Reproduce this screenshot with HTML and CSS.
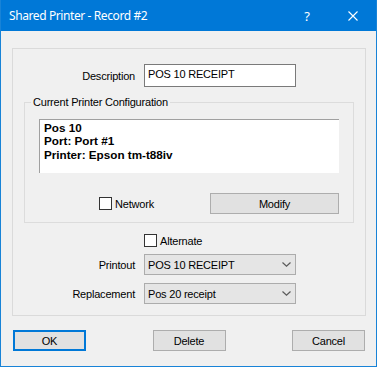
FILE: index.html
```html
<!DOCTYPE html>
<html lang="en">
<head>
<meta charset="UTF-8">
<title>Shared Printer - Record #2</title>
<link rel="stylesheet" href="styles.css">
</head>
<body>
<div class="window">
  <div class="titlebar">
    <span class="title">Shared Printer - Record #2</span>
    <span class="tb-btn help">?</span>
    <span class="tb-btn">
      <svg width="10" height="10" viewBox="0 0 10 10"><path d="M0.5 0.5L9.5 9.5M9.5 0.5L0.5 9.5" stroke="#fff" stroke-width="1.1" fill="none"/></svg>
    </span>
  </div>

  <div class="content">
    <div class="panel">
      <div class="field">
        <span class="field-label">Description</span>
        <div class="textbox">POS 10 RECEIPT</div>
      </div>

      <fieldset class="group">
        <legend>Current Printer Configuration</legend>
        <div class="listbox">
          <div>Pos 10</div>
          <div>Port: Port #1</div>
          <div>Printer: Epson tm-t88iv</div>
        </div>
        <div class="group-foot">
          <label class="check"><span class="box"></span>Network</label>
          <button class="btn modify">Modify</button>
        </div>
      </fieldset>

      <div class="field alt-row">
        <span class="field-label"></span>
        <label class="check"><span class="box"></span>Alternate</label>
      </div>
      <div class="field sel-row">
        <span class="field-label">Printout</span>
        <div class="combo">POS 10 RECEIPT<svg class="chev" width="9" height="5" viewBox="0 0 9 5"><path d="M0.5 0.5L4.5 4.2L8.5 0.5" stroke="#5a5a5a" stroke-width="1.2" fill="none"/></svg></div>
      </div>
      <div class="field sel-row">
        <span class="field-label">Replacement</span>
        <div class="combo">Pos 20 receipt<svg class="chev" width="9" height="5" viewBox="0 0 9 5"><path d="M0.5 0.5L4.5 4.2L8.5 0.5" stroke="#5a5a5a" stroke-width="1.2" fill="none"/></svg></div>
      </div>
    </div>

    <div class="buttons">
      <button class="btn dlg default">OK</button>
      <button class="btn dlg">Delete</button>
      <button class="btn dlg">Cancel</button>
    </div>
  </div>
</div>
</body>
</html>
```
FILE: styles.css
```css
body{margin:0;background:#fff;font-family:"Liberation Sans",Arial,sans-serif;font-size:11px;letter-spacing:-0.2px;color:#000;}
.window{width:375px;height:366px;border:1px solid #1883d7;border-top:0;background:#f0f0f0;}
.titlebar{height:31px;display:flex;align-items:center;background:#0078d7;color:#fff;}
.title{padding-left:8px;font-family:"Segoe UI","Noto Sans",sans-serif;font-size:12px;letter-spacing:-0.4px;}
.tb-btn{width:46px;height:31px;display:flex;align-items:center;justify-content:center;font-family:"Noto Sans",sans-serif;font-size:13px;letter-spacing:0;}
.help{margin-left:auto;}

.content{padding:17px 10px 0 11px;}
.panel{border:1px solid #dadada;padding:15px 0 11px 0;}
.field{display:flex;align-items:center;}
.field-label{width:122px;margin-right:9px;text-align:right;}
.textbox{width:147px;height:21px;line-height:19px;border:1px solid #7a7a7a;background:#fff;padding-left:3px;}

.group{margin:9px 11px 0 11px;padding:10px 14px 8px 14px;border:1px solid #dcdcdc;min-width:0;}
.group legend{margin-left:-8px;padding:0 2px;line-height:13px;}
.listbox{height:54px;box-sizing:border-box;border-top:1px solid #a0a0a0;border-left:1px solid #a0a0a0;background:#fff;padding:1px 0 0 4px;font-weight:bold;font-size:11.7px;letter-spacing:0;line-height:13.3px;}
.group-foot{display:flex;align-items:center;margin-top:20px;}
.group-foot .check{margin-left:60px;}
.check{display:flex;align-items:center;gap:3px;}
.box{width:11px;height:11px;border:1px solid #333;background:#fff;}

.btn{font-family:inherit;font-size:11px;letter-spacing:-0.2px;background:#e1e1e1;border:1px solid #adadad;padding:0;color:#000;box-sizing:border-box;}
.modify{margin-left:auto;width:129px;height:21px;}

.alt-row{margin-top:11px;}
.sel-row{margin-top:7px;}
.sel-row + .sel-row{margin-top:8px;}
.combo{display:flex;align-items:center;width:152px;height:21px;box-sizing:border-box;background:#e5e5e5;border:1px solid #acacac;padding-left:3px;}
.chev{margin-left:auto;margin-right:4px;}

.buttons{display:flex;justify-content:space-between;margin:14px 1px 0 1px;}
.dlg{width:73px;height:21px;}
.default{border:2px solid #0078d7;}
```
